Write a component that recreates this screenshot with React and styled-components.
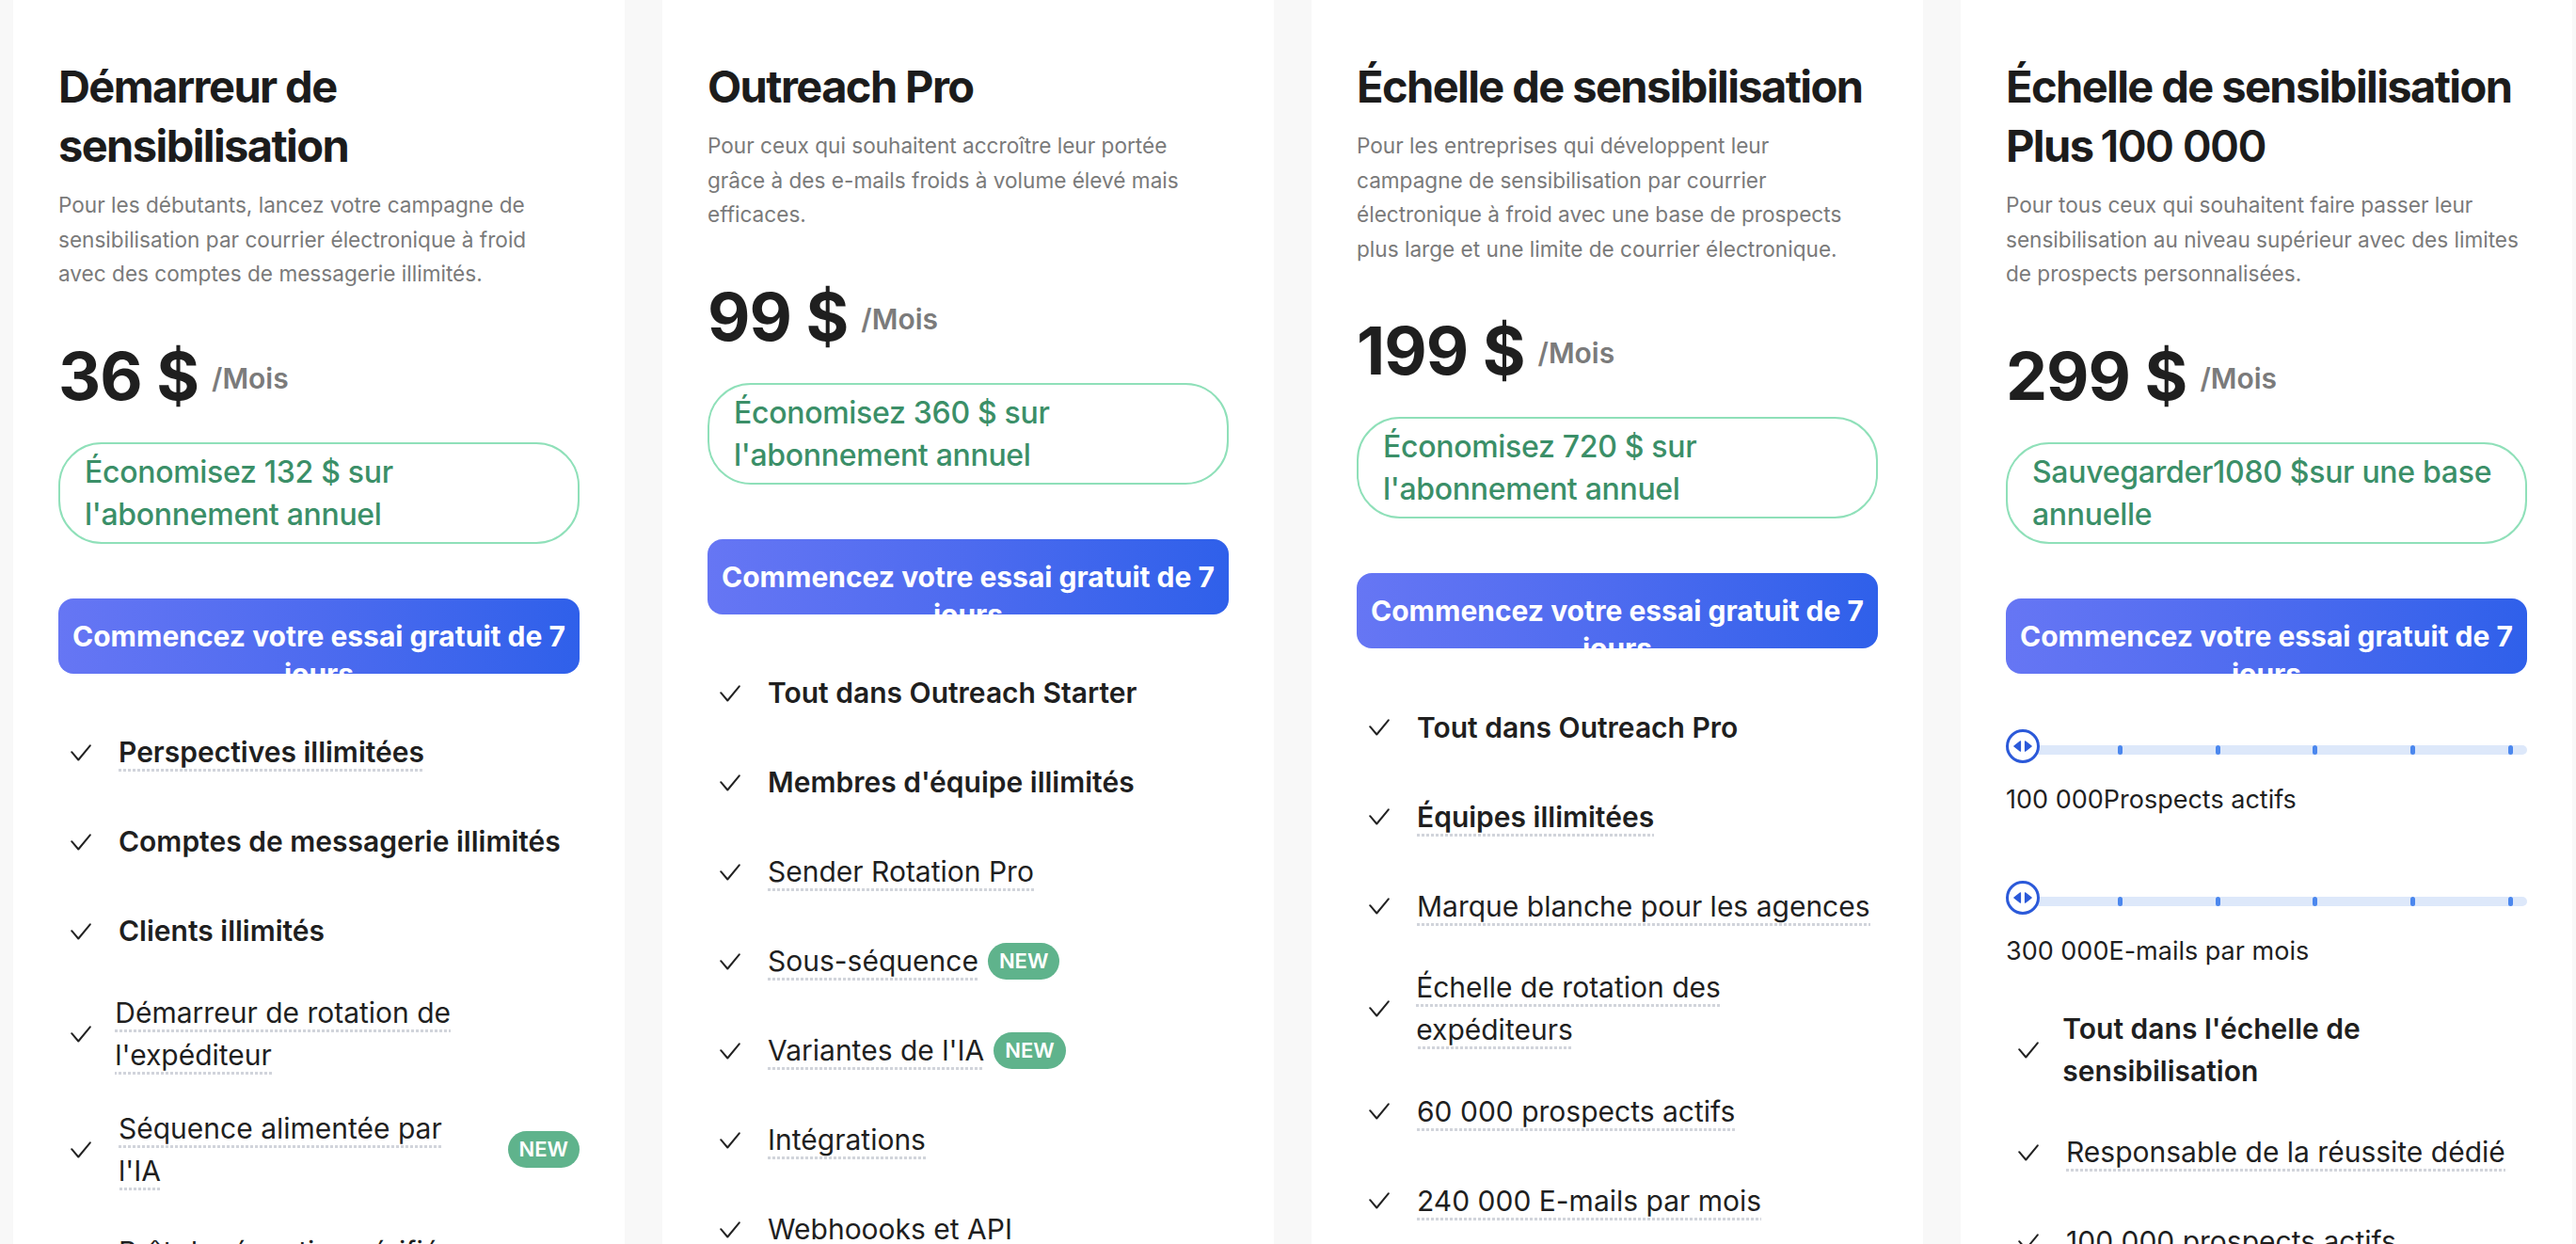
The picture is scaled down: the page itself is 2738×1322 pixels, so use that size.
import styled, { createGlobalStyle } from 'styled-components';

const GlobalStyle = createGlobalStyle`
    html, body {
        margin: 0;
        padding: 0;
        overflow: hidden;
        background: #f8f8f8;
    }
    body {
        font-family: Inter, "Noto Sans", sans-serif;
        -webkit-font-smoothing: antialiased;
    }
    * { box-sizing: border-box; }
`

const Page = styled.div`
    height: 100vh;
    overflow: hidden;
    padding: 0 14px;
    display: grid;
    grid-template-columns: repeat(4, 650px);
    column-gap: 40px;
    align-items: start;
`
const Card = styled.div`
    background: #ffffff;
    padding: 60px 48px;
    min-height: 1600px;
    display: flex;
    flex-direction: column;
`
const Title = styled.h2`
    margin: 0;
    font-size: 47px;
    line-height: 63px;
    font-weight: 700;
    letter-spacing: -1.6px;
    color: #1c1c1c;
`
const TitleLight = styled.span`
    font-weight: 600;
    margin-left: 8px;
`
const Desc = styled.p`
    margin: 14px 0 0;
    font-size: 22.6px;
    line-height: 36.5px;
    color: #7a7a7a;
`
const PriceRow = styled.div`
    margin-top: 48px;
    display: flex;
    align-items: center;
    gap: 14px;
`
const Price = styled.span`
    font-size: 70px;
    line-height: 84px;
    font-weight: 700;
    letter-spacing: -1px;
    color: #1f1f1f;
`
const Per = styled.span`
    font-size: 30px;
    font-weight: 600;
    color: #7b7b7b;
    margin-top: 4px;
`
const Savings = styled.div`
    margin-top: 28px;
    border: 2px solid #8fe0b9;
    border-radius: 46px;
    padding: 7px 26px;
    font-size: 32px;
    line-height: 45px;
    font-weight: 500;
    letter-spacing: -0.3px;
    color: #3b8f68;
`
const TrialButton = styled.button`
    margin-top: 58px;
    height: 80px;
    width: 100%;
    padding: 20px 12px 0;
    border: none;
    border-radius: 16px;
    overflow: hidden;
    background: linear-gradient(90deg, #6676f4 0%, #4d6bef 50%, #2f60ea 100%);
    color: #ffffff;
    font-family: inherit;
    font-size: 30px;
    line-height: 40px;
    font-weight: 700;
    text-align: center;
`
const Features = styled.ul`
    list-style: none;
    margin: ${p => p.$top}px 0 0;
    padding: 0;
    display: flex;
    flex-direction: column;
    gap: 33px;
`
const Feature = styled.li`
    display: flex;
    align-items: center;
    min-height: 62px;
`
const CheckBox = styled.span`
    flex: 0 1 64px;
    padding-left: 13px;
    display: flex;
    align-items: center;
`
const Label = styled.span`
    flex: ${p => (p.$grow ? '1 1 auto' : '0 1 auto')};
    font-size: 30px;
    line-height: 45px;
    white-space: pre-line;
    color: #1f1f1f;
    font-weight: ${p => (p.$bold ? 600 : 400)};
`
const Dashed = styled.span`
    padding-bottom: 3px;
    background-image: ${p => (p.$u ? 'linear-gradient(90deg, #d1d4db 0 60%, transparent 60% 100%)' : 'none')};
    background-size: 5px 3px;
    background-repeat: repeat-x;
    background-position: 0 100%;
`
const NewBadge = styled.span`
    flex: 0 0 auto;
    margin-left: 10px;
    height: 39px;
    padding: 0 12px;
    border-radius: 20px;
    background: #5fb38c;
    color: #ffffff;
    font-size: 22px;
    line-height: 39px;
    font-weight: 600;
`
const Sliders = styled.div`
    margin-top: 59px;
    display: flex;
    flex-direction: column;
`
const SliderWrap = styled.div`
    position: relative;
    height: 36px;
    padding-top: 17px;
    margin-top: ${p => p.$top || 0}px;
`
const Track = styled.div`
    height: 10px;
    border-radius: 5px;
    background: #dde8fa;
    padding: 0 15px;
    display: flex;
    justify-content: space-between;
`
const Tick = styled.span`
    width: 5px;
    height: 10px;
    border-radius: 3px;
    background: #4b87ee;
`
const Thumb = styled.span`
    position: absolute;
    left: 0;
    top: 0;
    width: 36px;
    height: 36px;
    border-radius: 50%;
    border: 3.5px solid #2b59d9;
    background: #ffffff;
    display: flex;
    align-items: center;
    justify-content: center;
`
const SliderLabel = styled.div`
    margin-top: 19px;
    font-size: 27px;
    line-height: 40px;
    color: #1f1f1f;
`

const CheckIcon = () => (
    <svg width="22" height="18" viewBox="0 0 22 18" fill="none">
        <path d="M1.2 8.2 L8.3 16.5 L20.8 1.3" stroke="#222" strokeWidth="2" strokeLinecap="round" strokeLinejoin="round" />
    </svg>
)

const ThumbIcon = () => (
    <svg width="20" height="12" viewBox="0 0 20 12" fill="#2b59d9" stroke="#2b59d9" strokeWidth="1.2" strokeLinejoin="round">
        <path d="M7.5 0.8 L0.8 6 L7.5 11.2 Z" />
        <path d="M12.5 0.8 L19.2 6 L12.5 11.2 Z" />
    </svg>
)

const Slider = ({ label, top }) => (
    <>
        <SliderWrap $top={top}>
            <Track>
                {[0, 1, 2, 3, 4, 5].map(i => <Tick key={i} />)}
            </Track>
            <Thumb><ThumbIcon /></Thumb>
        </SliderWrap>
        <SliderLabel>{label}</SliderLabel>
    </>
)

const plans = [
    {
        title: 'Démarreur de sensibilisation',
        desc: 'Pour les débutants, lancez votre campagne de sensibilisation par courrier électronique à froid avec des comptes de messagerie illimités.',
        price: '36 $',
        save: "Économisez 132 $ sur l'abonnement annuel",
        features: [
            { t: 'Perspectives illimitées', b: true, u: true },
            { t: 'Comptes de messagerie illimités', b: true },
            { t: 'Clients illimités', b: true },
            { t: "Démarreur de rotation de l'expéditeur", u: true },
            { t: "Séquence alimentée par\nl'IA", u: true, n: true, grow: true },
            { t: 'Prêt de réception vérifié', u: true },
        ],
    },
    {
        title: 'Outreach Pro',
        desc: 'Pour ceux qui souhaitent accroître leur portée grâce à des e-mails froids à volume élevé mais efficaces.',
        price: '99 $',
        save: "Économisez 360 $ sur l'abonnement annuel",
        features: [
            { t: 'Tout dans Outreach Starter', b: true },
            { t: "Membres d'équipe illimités", b: true },
            { t: 'Sender Rotation Pro', u: true },
            { t: 'Sous-séquence', u: true, n: true },
            { t: "Variantes de l'IA", u: true, n: true },
            { t: 'Intégrations', u: true },
            { t: 'Webhoooks et API', u: true },
        ],
    },
    {
        title: 'Échelle de sensibilisation',
        desc: 'Pour les entreprises qui développent leur campagne de sensibilisation par courrier électronique à froid avec une base de prospects plus large et une limite de courrier électronique.',
        price: '199 $',
        save: "Économisez 720 $ sur l'abonnement annuel",
        features: [
            { t: 'Tout dans Outreach Pro', b: true },
            { t: 'Équipes illimitées', b: true, u: true },
            { t: 'Marque blanche pour les agences', u: true },
            { t: 'Échelle de rotation des expéditeurs', u: true },
            { t: '60\u00a0000 prospects actifs', u: true },
            { t: '240\u00a0000 E-mails par mois', u: true },
        ],
    },
    {
        title: 'Échelle de sensibilisation',
        extra: 'Plus',
        extraNum: '100\u00a0000',
        desc: 'Pour tous ceux qui souhaitent faire passer leur sensibilisation au niveau supérieur avec des limites de prospects personnalisées.',
        price: '299 $',
        save: 'Sauvegarder1080 $sur une base annuelle',
        sliders: ['100\u00a0000Prospects actifs', '300\u00a0000E-mails par mois'],
        features: [
            { t: "Tout dans l'échelle de sensibilisation", b: true },
            { t: 'Responsable de la réussite dédié', u: true },
            { t: '100\u00a0000 prospects actifs', u: true },
        ],
    },
]

const PlanCard = ({ plan }) => (
    <Card>
        <Title>
            {plan.title}
            {plan.extra && <> {plan.extra}<TitleLight>{plan.extraNum}</TitleLight></>}
        </Title>
        <Desc>{plan.desc}</Desc>
        <PriceRow>
            <Price>{plan.price}</Price>
            <Per>/Mois</Per>
        </PriceRow>
        <Savings>{plan.save}</Savings>
        <TrialButton>Commencez votre essai gratuit de 7 jours</TrialButton>
        {plan.sliders && (
            <Sliders>
                <Slider label={plan.sliders[0]} />
                <Slider label={plan.sliders[1]} top={66} />
            </Sliders>
        )}
        <Features $top={plan.sliders ? 40 : 53}>
            {plan.features.map(f => (
                <Feature key={f.t}>
                    <CheckBox><CheckIcon /></CheckBox>
                    <Label $bold={f.b} $grow={f.grow}>
                        <Dashed $u={f.u}>{f.t}</Dashed>
                    </Label>
                    {f.n && <NewBadge>NEW</NewBadge>}
                </Feature>
            ))}
        </Features>
    </Card>
)

const App = () => {
    return (
        <Page>
            <GlobalStyle />
            {plans.map(p => <PlanCard key={p.price} plan={p} />)}
        </Page>
    )
}

export default App;
